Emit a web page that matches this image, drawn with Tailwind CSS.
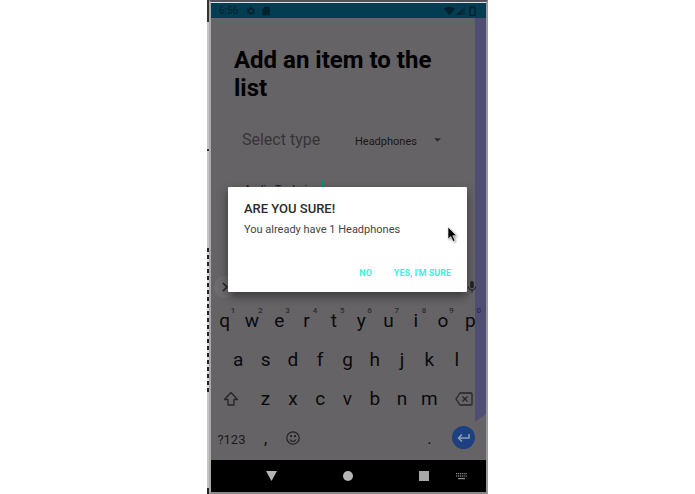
<!DOCTYPE html>
<html lang="en">
<head>
  <meta charset="UTF-8" />
  <meta name="viewport" content="width=device-width, initial-scale=1.0" />
  <title>Add item</title>
  <script src="https://cdn.jsdelivr.net/npm/@tailwindcss/browser@4"></script>
</head>
<body class="bg-white font-[Roboto,sans-serif] text-[#0a0a0a]">
  <div class="mx-auto flex w-[281px] min-h-screen">

    <!-- left edge -->
    <div class="flex w-[2px] flex-col bg-[#c4c4c4]">
      <div class="h-[22px] bg-[#333]"></div>
      <div class="h-[127px]"></div>
      <div class="h-[2px] bg-[#333]"></div>
      <div class="h-[97px]"></div>
      <div class="h-[144px] bg-[repeating-linear-gradient(#222_0_4px,#ddd_4px_7px)]"></div>
      <div class="grow"></div>
      <div class="h-[6px] bg-[#222]"></div>
    </div>

    <div class="flex grow flex-col border-x-2 border-t-2 border-b-2 border-l-[#aaa] border-r-[#999] border-t-[#55505a] border-b-[#888] bg-[#666366]">
      <div class="h-px bg-[#dde4e8]"></div>

      <div class="relative flex grow flex-col">
        <!-- status bar -->
        <header class="flex h-[15px] items-center bg-[#033d52] pr-[10px] pl-2 text-[#03222f]">
          <span class="w-[27px] text-[10px] leading-none">6:56</span>
          <svg class="size-[10px]" viewBox="0 0 24 24" fill="currentColor"><path fill-rule="evenodd" d="M19.4 13a7.500 7.500 0 0 0 0-2l2.100-1.600-2-3.500-2.500 1a7.300 7.300 0 0 0-1.700-1L15 3h-6l-.4 2.900a7.300 7.300 0 0 0-1.700 1l-2.500-1-2 3.500L4.600 11a7.500 7.500 0 0 0 0 2l-2.200 1.600 2 3.500 2.500-1a7.300 7.300 0 0 0 1.700 1L9 21h6l.4-2.900a7.300 7.300 0 0 0 1.700-1l2.500 1 2-3.500zM12 16a4 4 0 1 1 0-8 4 4 0 0 1 0 8z"/></svg>
          <svg class="ml-[5px] size-[10px]" viewBox="0 0 24 24" fill="currentColor"><path d="M9 2 3 8v14h18V2z"/></svg>
          <span class="grow"></span>
          <svg class="h-[10px] w-[11px]" viewBox="0 0 24 22" fill="currentColor"><path d="M12 21 0 6c7-6 17-6 24 0z"/></svg>
          <svg class="ml-px size-[9px]" viewBox="0 0 24 24"><path d="M24 0v24H0z" fill="currentColor" opacity=".5"/><path d="M14 10v14H0z" fill="currentColor"/></svg>
          <svg class="ml-1 h-[10px] w-[7px]" viewBox="0 0 14 20"><path d="M5 1h4v2h3v16H2V3h3z" fill="none" stroke="currentColor" stroke-width="3"/></svg>
        </header>

        <!-- side strip -->
        <div class="absolute top-[15px] right-0 h-[404px] w-[11px] bg-[#504d73] [clip-path:polygon(0_0,100%_0,100%_98%,0_100%)]"></div>

        <!-- form -->
        <section class="relative h-[254px] px-[23px] pt-7">
          <h1 class="text-2xl leading-7 font-bold text-black">Add an item to the list</h1>
          <div class="mt-6 flex h-7 items-center pl-2">
            <label for="type" class="w-[113px] text-base text-[#363437]">Select type</label>
            <span class="relative">
              <select id="type" class="w-[90px] appearance-none bg-transparent text-[11px] leading-4 text-[#18171a]">
                <option>Headphones</option>
              </select>
              <svg class="pointer-events-none absolute top-[10px] right-1 h-[4px] w-[7px]" viewBox="0 0 10 5" fill="#2c2a2d"><path d="M0 0h10L5 5z"/></svg>
            </span>
          </div>
          <div class="mt-[26px] flex h-4 items-start pl-[10px]">
            <input aria-label="Item name" value="Audio Technica" class="w-[78px] bg-transparent pt-0.5 text-[11px] leading-4 text-[#18171a]" />
            <span class="h-4 w-px bg-[#138578]"></span>
          </div>
        </section>

        <!-- keyboard -->
        <section class="relative pr-0.5">
          <div class="flex h-[29px] items-center justify-between pl-[3px]">
            <button aria-label="More" class="flex size-[22px] items-center justify-center rounded-full bg-[#6e6b6e]">
              <svg class="size-[10px]" viewBox="0 0 10 10" fill="none" stroke="#222" stroke-width="1.500"><path d="M3 1l4 4-4 4"/></svg>
            </button>
            <button aria-label="Voice" class="pr-[7px]">
              <svg class="h-[12px] w-[10px]" viewBox="0 0 14 20" fill="#222"><rect x="4" y="0" width="6" height="12" rx="3"/><path d="M1 9a6 6 0 0 0 12 0M7 15v4" fill="none" stroke="#222" stroke-width="2"/></svg>
            </button>
          </div>

          <div class="grid h-[39px] grid-cols-10 text-[19px] leading-[39px]">
            <button class="relative">q<sup class="absolute top-[5px] right-[3px] text-[8px] leading-[10px] font-medium text-[#2b2b2b]">1</sup></button>
            <button class="relative">w<sup class="absolute top-[5px] right-[3px] text-[8px] leading-[10px] font-medium text-[#2b2b2b]">2</sup></button>
            <button class="relative">e<sup class="absolute top-[5px] right-[3px] text-[8px] leading-[10px] font-medium text-[#2b2b2b]">3</sup></button>
            <button class="relative">r<sup class="absolute top-[5px] right-[3px] text-[8px] leading-[10px] font-medium text-[#2b2b2b]">4</sup></button>
            <button class="relative">t<sup class="absolute top-[5px] right-[3px] text-[8px] leading-[10px] font-medium text-[#2b2b2b]">5</sup></button>
            <button class="relative">y<sup class="absolute top-[5px] right-[3px] text-[8px] leading-[10px] font-medium text-[#2b2b2b]">6</sup></button>
            <button class="relative">u<sup class="absolute top-[5px] right-[3px] text-[8px] leading-[10px] font-medium text-[#2b2b2b]">7</sup></button>
            <button class="relative">i<sup class="absolute top-[5px] right-[3px] text-[8px] leading-[10px] font-medium text-[#2b2b2b]">8</sup></button>
            <button class="relative">o<sup class="absolute top-[5px] right-[3px] text-[8px] leading-[10px] font-medium text-[#2b2b2b]">9</sup></button>
            <button class="relative">p<sup class="absolute top-[5px] right-[3px] text-[8px] leading-[10px] font-medium text-[#2b2960]">0</sup></button>
          </div>

          <div class="grid h-[39px] grid-cols-20 text-[19px] leading-[39px]">
            <button class="col-span-2 col-start-2">a</button>
            <button class="col-span-2">s</button>
            <button class="col-span-2">d</button>
            <button class="col-span-2">f</button>
            <button class="col-span-2">g</button>
            <button class="col-span-2">h</button>
            <button class="col-span-2">j</button>
            <button class="col-span-2">k</button>
            <button class="col-span-2">l</button>
          </div>

          <div class="grid h-[39px] grid-cols-20 text-[19px] leading-[39px]">
            <button aria-label="Shift" class="col-span-3 flex items-center justify-center">
              <svg class="size-[16px]" viewBox="0 0 16 16" fill="none" stroke="#262527" stroke-width="1.300" stroke-linejoin="round"><path d="M8 1.500 14.500 8.500H11V14H5V8.500H1.500z"/></svg>
            </button>
            <button class="col-span-2">z</button>
            <button class="col-span-2">x</button>
            <button class="col-span-2">c</button>
            <button class="col-span-2">v</button>
            <button class="col-span-2">b</button>
            <button class="col-span-2">n</button>
            <button class="col-span-2">m</button>
            <button aria-label="Backspace" class="col-span-3 flex items-center justify-center">
              <svg class="h-[14px] w-[18px]" viewBox="0 0 18 14" fill="none" stroke="#262527" stroke-width="1.300" stroke-linejoin="round"><path d="M5 1h11a1 1 0 0 1 1 1v10a1 1 0 0 1-1 1H5L1 7zM7.500 4.500l5 5M12.500 4.500l-5 5"/></svg>
            </button>
          </div>

          <div class="grid h-[42px] grid-cols-20 text-[19px] leading-[39px]">
            <button class="col-span-3 text-[13px] text-[#1c1b1d]">?123</button>
            <button class="col-span-2 text-base">,</button>
            <button aria-label="Emoji" class="col-span-2 flex h-[39px] items-center justify-center">
              <svg class="size-[14px]" viewBox="0 0 14 14" fill="none" stroke="#222123" stroke-width="1.200"><circle cx="7" cy="7" r="6.200"/><path d="M4 8.500a3.300 3.300 0 0 0 6 0"/><circle cx="5" cy="5.200" r=".5" fill="#222123"/><circle cx="9" cy="5.200" r=".5" fill="#222123"/></svg>
            </button>
            <button aria-label="Space" class="col-span-8"></button>
            <button class="col-span-2 text-base">.</button>
            <button aria-label="Enter" class="col-span-3 flex h-[39px] items-center justify-center">
              <span class="flex size-[23px] items-center justify-center rounded-full bg-[#1d4080]">
                <svg class="h-[9px] w-[13px]" viewBox="0 0 13 9" fill="none" stroke="#8d9cb8" stroke-width="1.500"><path d="M12 1v4H1.500M5 1.500 1.500 5 5 8.500"/></svg>
              </span>
            </button>
          </div>
        </section>

        <!-- navigation bar -->
        <nav class="grid h-[32px] grid-cols-[122px_31px_1fr_26px_49px] items-center bg-black">
          <button aria-label="Back" class="flex justify-center">
            <svg class="h-[10px] w-[11px]" viewBox="0 0 11 10" fill="#b5b5b5"><path d="M0 0h11L5.500 10z"/></svg>
          </button>
          <button aria-label="Home" class="flex justify-center">
            <span class="size-[10px] rounded-full bg-[#b5b5b5]"></span>
          </button>
          <span></span>
          <button aria-label="Recent" class="flex justify-center">
            <span class="size-[10px] bg-[#a9a9a9]"></span>
          </button>
          <button aria-label="Keyboard" class="flex justify-center">
            <svg class="h-[7px] w-[11px]" viewBox="0 0 11 7" fill="none" stroke="#aaa"><path d="M0 .7h11M0 3h11" stroke-dasharray="1.200 .7"/><path d="M2 5.700h7"/></svg>
          </button>
        </nav>

        <!-- confirm dialog -->
        <div role="dialog" aria-labelledby="dialog-title" class="absolute top-[184px] right-[19px] left-[17px] flex h-[105px] flex-col rounded-[1px] bg-white px-4 pt-3 pb-2 shadow-[0_4px_10px_rgba(0,0,0,0.45)]">
          <h2 id="dialog-title" class="text-[13px] leading-5 font-medium text-[#2b2b2b]">ARE YOU SURE!</h2>
          <p class="mt-[3px] text-[11px] leading-4 text-[#444]">You already have 1 Headphones</p>
          <div class="mt-auto flex h-5 justify-end gap-[22px] text-[9px] font-bold text-[#3cf0de]">
            <button>NO</button>
            <button>YES, I'M SURE</button>
          </div>
          <svg class="absolute top-[39px] right-[10px] h-[17px] w-[10px] drop-shadow-[1px_1px_1px_rgba(0,0,0,0.4)]" viewBox="0 0 10 17" fill="#000" stroke="#fff" stroke-width=".6"><path d="M1 1v12l2.800-2.500L6 15.500l2-1-2.200-4.800H9.500z"/></svg>
        </div>
      </div>
    </div>
  </div>
</body>
</html>
